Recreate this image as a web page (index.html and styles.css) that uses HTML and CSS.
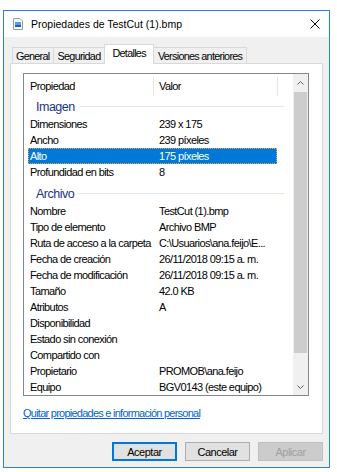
FILE: index.html
```html
<!DOCTYPE html>
<html lang="es">
<head>
  <meta charset="UTF-8">
  <title>Propiedades de TestCut (1).bmp</title>
  <link rel="stylesheet" href="styles.css">
</head>
<body>

  <div class="window">
    <div class="titlebar">
      <svg class="file-icon" width="10" height="12" viewBox="0 0 10 12">
        <path d="M0.5 0.5 H7 L9.5 3 V11.5 H0.5 Z" fill="#fff" stroke="#9a9a9a"/>
        <rect x="2" y="4" width="6" height="3" fill="#5b9de3"/>
        <rect x="2" y="7" width="6" height="2" fill="#1d5fb3"/>
      </svg>
      <span class="title">Propiedades de TestCut (1).bmp</span>
      <svg class="close" width="10" height="10" viewBox="0 0 10 10">
        <path d="M0.5 0.5 L9.5 9.5 M9.5 0.5 L0.5 9.5" stroke="#000" stroke-width="1"/>
      </svg>
    </div>

    <div class="content">
      <div class="tabs">
        <div class="tab">General</div>
        <div class="tab">Seguridad</div>
        <div class="tab active">Detalles</div>
        <div class="tab">Versiones anteriores</div>
      </div>

      <div class="panel">
        <div class="list">
          <div class="list-main">
            <div class="list-head">
              <div class="head-name">Propiedad</div>
              <div class="head-value">Valor</div>
            </div>

            <div class="group">Imagen</div>
            <div class="row"><div class="name">Dimensiones</div><div class="value">239 x 175</div></div>
            <div class="row"><div class="name">Ancho</div><div class="value">239 píxeles</div></div>
            <div class="row selected"><div class="name">Alto</div><div class="value">175 píxeles</div></div>
            <div class="row"><div class="name">Profundidad en bits</div><div class="value">8</div></div>

            <div class="group spaced">Archivo</div>
            <div class="row"><div class="name">Nombre</div><div class="value">TestCut (1).bmp</div></div>
            <div class="row"><div class="name">Tipo de elemento</div><div class="value">Archivo BMP</div></div>
            <div class="row"><div class="name">Ruta de acceso a la carpeta</div><div class="value">C:\Usuarios\ana.feijo\E...</div></div>
            <div class="row"><div class="name">Fecha de creación</div><div class="value">26/11/2018 09:15 a. m.</div></div>
            <div class="row"><div class="name">Fecha de modificación</div><div class="value">26/11/2018 09:15 a. m.</div></div>
            <div class="row"><div class="name">Tamaño</div><div class="value">42.0 KB</div></div>
            <div class="row"><div class="name">Atributos</div><div class="value">A</div></div>
            <div class="row"><div class="name">Disponibilidad</div><div class="value"></div></div>
            <div class="row"><div class="name">Estado sin conexión</div><div class="value"></div></div>
            <div class="row"><div class="name">Compartido con</div><div class="value"></div></div>
            <div class="row"><div class="name">Propietario</div><div class="value">PROMOB\ana.feijo</div></div>
            <div class="row"><div class="name">Equipo</div><div class="value">BGV0143 (este equipo)</div></div>
          </div>

          <div class="scrollbar">
            <div class="sb-btn">
              <svg width="7" height="4" viewBox="0 0 7 4"><path d="M0.5 3.5 L3.5 0.5 L6.5 3.5" fill="none" stroke="#606060"/></svg>
            </div>
            <div class="sb-thumb"></div>
            <div class="sb-track"></div>
            <div class="sb-btn">
              <svg width="7" height="4" viewBox="0 0 7 4"><path d="M0.5 0.5 L3.5 3.5 L6.5 0.5" fill="none" stroke="#606060"/></svg>
            </div>
          </div>
        </div>

        <a class="link" href="#">Quitar propiedades e información personal</a>
      </div>

      <div class="buttons">
        <button class="btn default">Aceptar</button>
        <button class="btn">Cancelar</button>
        <button class="btn disabled">Aplicar</button>
      </div>
    </div>
  </div>

</body>
</html>
```

FILE: styles.css
```css
:root {
  --accent: #0078d7;
  --border: #d9d9d9;
  --face: #f0f0f0;
}

body {
  margin: 0;
  background: #fff;
  font-family: "Liberation Sans", Arial, sans-serif;
  font-size: 11px;
  letter-spacing: -0.6px;
  color: #000;
}

.window {
  margin: 10px 0 0 3px;
  width: 325px;
  border: 1px solid #2f80d6;
}

.titlebar {
  display: flex;
  align-items: center;
  height: 26px;
  padding: 0 9px;
  background: #fff;
}

.title {
  flex: 1;
  margin-left: 8px;
  font-size: 10.5px;
  letter-spacing: 0;
}

.content {
  background: var(--face);
  padding: 7px 6px 6px 6px;
}

.tabs {
  display: flex;
  align-items: flex-end;
  height: 19px;
  padding-left: 2px;
}

.tab {
  height: 16px;
  line-height: 16px;
  padding: 0 4px;
  border: 1px solid var(--border);
  border-bottom: none;
  margin-left: -1px;
  background: var(--face);
  box-sizing: border-box;
  font-size: 10.8px;
  letter-spacing: -0.7px;
}

.tab:first-child {
  margin-left: 0;
  padding: 0 3px;
}

.tab.active {
  position: relative;
  z-index: 1;
  height: 20px;
  line-height: 16px;
  margin-bottom: -1px;
  padding: 0 7px;
  background: #fff;
}

.panel {
  height: 371px;
  box-sizing: border-box;
  border: 1px solid var(--border);
  background: #fff;
  padding: 9px 13px 0 12px;
}

.list {
  display: flex;
  height: 323px;
  box-sizing: border-box;
  border: 1px solid #828790;
  overflow: hidden;
}

.list-main {
  flex: 1;
  overflow: hidden;
}

.list-head {
  display: flex;
  height: 23px;
}

.head-name,
.head-value {
  height: 19px;
  line-height: 19px;
  margin-top: 3px;
  border-right: 1px solid #e5e5e5;
  box-sizing: border-box;
}

.head-name {
  width: 130px;
  padding-left: 6px;
}

.head-value {
  width: 124px;
  padding-left: 5px;
}

.group {
  display: flex;
  align-items: center;
  height: 19px;
  padding: 0 9px 0 12px;
  color: #1e3287;
  font-size: 12.5px;
  letter-spacing: -0.5px;
}

.group::after {
  content: "";
  flex: 1;
  height: 1px;
  margin-left: 4px;
  background: #dfe8f4;
}

.group.spaced {
  height: 23px;
  padding-top: 4px;
  box-sizing: border-box;
}

.row {
  display: flex;
  width: 249px;
  height: 16px;
  line-height: 16px;
  margin-left: 4px;
  white-space: nowrap;
}

.name {
  width: 123px;
  padding-left: 2px;
  overflow: hidden;
}

.value {
  padding-left: 6px;
}

.row.selected {
  background: var(--accent);
  color: #fff;
  outline: 1px dotted #e9a94f;
  outline-offset: -1px;
}

.scrollbar {
  display: flex;
  flex-direction: column;
  width: 15px;
  background: var(--face);
}

.sb-btn {
  display: flex;
  align-items: center;
  justify-content: center;
  height: 17px;
}

.sb-thumb {
  height: 261px;
  margin: 1px 1px 0 1px;
  background: #cdcdcd;
}

.sb-track {
  flex: 1;
}

.link {
  display: block;
  margin-top: 9px;
  line-height: 16px;
  color: #0066cc;
  letter-spacing: -0.75px;
}

.buttons {
  display: flex;
  justify-content: flex-end;
  gap: 8px;
  margin-top: 8px;
}

.btn {
  width: 65px;
  height: 19px;
  padding: 0;
  border: 1px solid #adadad;
  background: #e1e1e1;
  font-family: inherit;
  font-size: 11px;
  letter-spacing: -0.5px;
  color: #000;
  box-sizing: border-box;
}

.btn.default {
  border: 2px solid var(--accent);
}

.btn.disabled {
  border-color: #bfbfbf;
  background: #cccccc;
  color: #a0a0a0;
}
```
